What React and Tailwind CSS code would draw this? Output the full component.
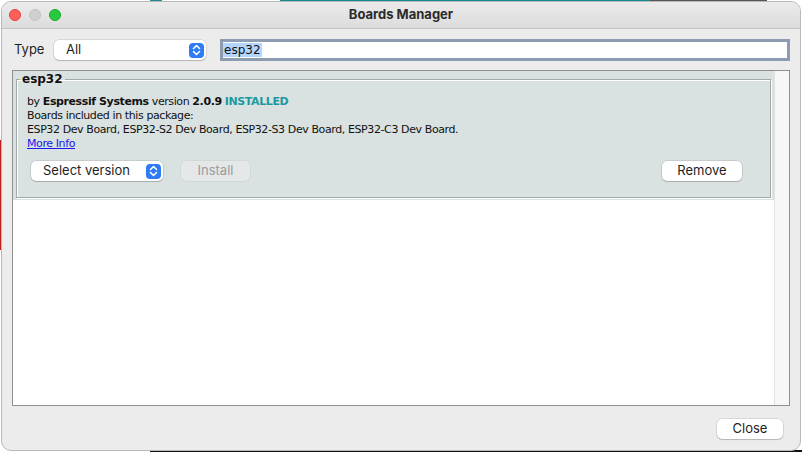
import React from "react";

function Stepper() {
  return (
    <span className="flex h-[15px] w-[15px] items-center justify-center rounded-[4px] bg-[#2f7bf5]">
      <svg width="9" height="12" viewBox="0 0 9 12" fill="none" stroke="#fff" strokeWidth="1.6" strokeLinecap="round" strokeLinejoin="round">
        <path d="M1.5 4.5 L4.5 1.5 L7.5 4.5" />
        <path d="M1.5 7.5 L4.5 10.5 L7.5 7.5" />
      </svg>
    </span>
  );
}

const sys = { fontFamily: 'Inter, "Noto Sans", sans-serif' };
const luc = { fontFamily: '"DejaVu Sans", Verdana, sans-serif' };

export default function App() {
  return (
    <div className="relative h-[452px] w-[802px] overflow-hidden bg-white">
      {/* desktop behind the window */}
      <div className="absolute left-[150px] top-0 h-[2px] w-[12px] bg-[#1f8a8f]" />
      <div className="absolute left-[280px] top-0 h-[2px] w-[370px] bg-[#138a8e]" />
      <div className="absolute left-[650px] top-0 h-[2px] w-[117px] bg-[#555]" />
      <div className="absolute left-0 top-[140px] h-[110px] w-[2px] bg-[#c0201c]" />
      <div className="absolute bottom-0 left-[150px] h-[2px] w-[652px] bg-[#111]" />

      <div className="relative ml-px mt-px flex h-[450px] w-[800px] flex-col overflow-hidden rounded-[10px] border border-[#b9b9b9] bg-[#ececec]">
        {/* title bar */}
        <div className="relative flex h-[27px] shrink-0 items-center border-b border-[#c4c4c4] bg-gradient-to-b from-[#ebebeb] to-[#dcdcdc]">
          <div className="flex items-center gap-[8px] pl-[7px]">
            <span className="h-[12px] w-[12px] rounded-full border border-[#e0443e] bg-[#fe5f57]" />
            <span className="h-[12px] w-[12px] rounded-full border border-[#c2c2c2] bg-[#d0d0d0]" />
            <span className="h-[12px] w-[12px] rounded-full border border-[#1aab29] bg-[#28c840]" />
          </div>
          <div className="absolute inset-0 flex items-center justify-center text-[13px] font-bold text-[#2b2b2b]" style={sys}>
            Boards Manager
          </div>
        </div>

        {/* body */}
        <div className="flex flex-1 flex-col px-[10px]">
          <div className="mt-[10px] flex h-[22px] items-center">
            <span className="ml-[2px] w-[40px] text-[13px] text-[#1e1e1e]" style={sys}>Type</span>
            <div className="flex h-[20px] w-[152px] items-center justify-between rounded-[5px] bg-white pl-[12px] pr-[2px] shadow-[0_0_0_0.5px_rgba(0,0,0,0.18),0_1px_1px_rgba(0,0,0,0.15)]">
              <span className="text-[13px] text-[#1e1e1e]" style={sys}>All</span>
              <Stepper />
            </div>
            <div className="ml-[14px] flex h-[22px] flex-1 items-center border-[3px] border-[#8c9db2] bg-white">
              <span className="bg-[#b4d5fe] px-[1px] text-[12px] leading-[14px] text-[#111]" style={luc}>esp32</span>
            </div>
          </div>

          {/* list */}
          <div className="mt-[9px] flex h-[336px] border border-[#8f8f8f] bg-white">
            <div className="flex-1">
              <div className="bg-[#d9e1e1] pb-[2px] pl-[3px] pr-[3px] pt-px">
                <fieldset className="border border-[#a2a9a9] px-[10px] pb-[16px] shadow-[inset_1px_1px_0_#fff,1px_1px_0_#fff]">
                  <legend className="-ml-[7px] px-[2px] text-[12px] font-bold leading-[14px] text-[#111]" style={luc}>esp32</legend>
                  <div className="pt-[9px] text-[11px] leading-[14px] tracking-[-0.4px] text-[#111]" style={luc}>
                    <div>
                      by <b>Espressif Systems</b> version <b>2.0.9</b> <b className="text-[#1a9aa0]">INSTALLED</b>
                    </div>
                    <div>Boards included in this package:</div>
                    <div>ESP32 Dev Board, ESP32-S2 Dev Board, ESP32-S3 Dev Board, ESP32-C3 Dev Board.</div>
                    <div>
                      <span className="text-[#1717ee] underline">More Info</span>
                    </div>
                  </div>
                  <div className="mt-[10px] flex h-[20px] items-center">
                    <div className="ml-[4px] flex h-[20px] w-[132px] items-center justify-between rounded-[5px] bg-white pl-[12px] pr-[2px] shadow-[0_0_0_0.5px_rgba(0,0,0,0.18),0_1px_1px_rgba(0,0,0,0.15)]">
                      <span className="text-[13px] text-[#1e1e1e]" style={sys}>Select version</span>
                      <Stepper />
                    </div>
                    <div className="ml-[18px] flex h-[20px] w-[69px] items-center justify-center rounded-[5px] bg-[#e4e8e8] text-[13px] text-[#9c9c9c] shadow-[0_0_0_0.5px_rgba(0,0,0,0.08)]" style={sys}>
                      Install
                    </div>
                    <div className="ml-auto mr-[18px] flex h-[20px] w-[80px] items-center justify-center rounded-[5px] bg-white text-[13px] text-[#1e1e1e] shadow-[0_0_0_0.5px_rgba(0,0,0,0.18),0_1px_1px_rgba(0,0,0,0.15)]" style={sys}>
                      Remove
                    </div>
                  </div>
                </fieldset>
              </div>
            </div>
            <div className="w-[15px] border-l border-[#e2e2e2] bg-[#f7f7f7]" />
          </div>

          <div className="mt-[13px] flex justify-end pr-[7px]">
            <div className="flex h-[20px] w-[66px] items-center justify-center rounded-[5px] bg-white text-[13px] text-[#1e1e1e] shadow-[0_0_0_0.5px_rgba(0,0,0,0.18),0_1px_1px_rgba(0,0,0,0.15)]" style={sys}>
              Close
            </div>
          </div>
        </div>
      </div>
    </div>
  );
}
